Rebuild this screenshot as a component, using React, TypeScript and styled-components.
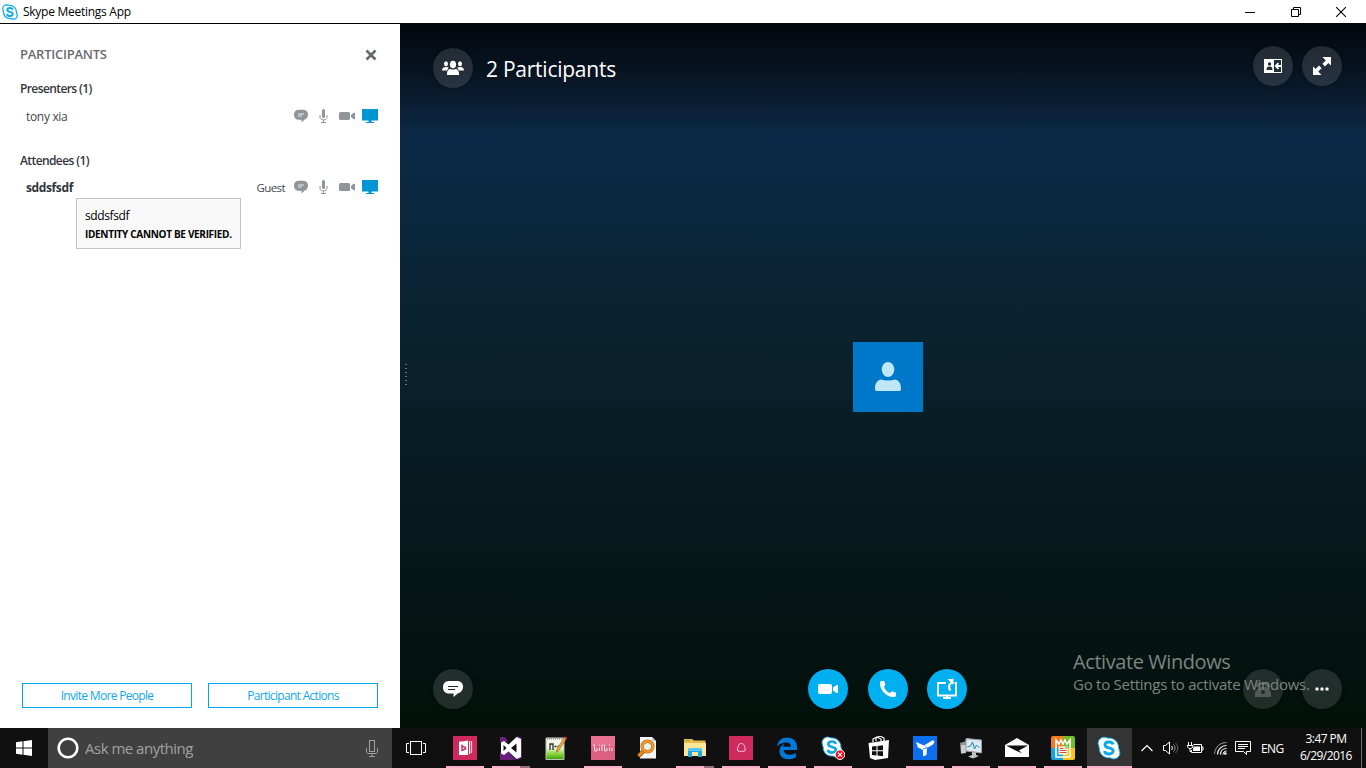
import React from 'react';
import styled, { createGlobalStyle } from 'styled-components';

const GlobalStyle = createGlobalStyle`
  * { box-sizing: border-box; }
  body {
    margin: 0;
    overflow: hidden;
    font-family: "Open Sans", "Noto Sans", sans-serif;
    font-size: 12px;
  }
  svg { display: block; flex: none; }
`;

const Desktop = styled.div`
  display: flex;
  flex-direction: column;
  width: 1366px;
  height: 768px;
  background: #fff;
`;

/* ---------- window title bar ---------- */
const TitleBar = styled.header`
  display: flex;
  align-items: center;
  height: 23px;
  flex: none;
  padding: 0 2px;
  background: #fff;
`;
const Title = styled.span`
  margin-left: 5px;
  line-height: 22px;
  color: #000;
  letter-spacing: -0.27px;
`;
const WindowControls = styled.div`
  display: flex;
  margin-left: auto;
`;
const ControlButton = styled.div`
  display: flex;
  align-items: center;
  justify-content: center;
  width: 45.5px;
  height: 21px;
`;

const Body = styled.div`
  display: flex;
  height: 705px;
  flex: none;
`;

/* ---------- participants panel ---------- */
const Panel = styled.aside`
  display: flex;
  flex-direction: column;
  width: 400px;
  flex: none;
  border-top: 1px solid #000;
  padding: 22px 22px 20px 20px;
  background: #fff;
`;
const PanelHeader = styled.div`
  display: flex;
  align-items: center;
  justify-content: space-between;
  height: 18px;
  padding-right: 1px;
`;
const PanelTitle = styled.h1`
  margin: -2px 0 0;
  font-size: 13px;
  font-weight: 600;
  letter-spacing: -0.25px;
  color: #6a6b70;
`;
const GroupTitle = styled.h2<{ $top: number }>`
  margin: ${p => p.$top}px 0 0;
  height: 18px;
  line-height: 18px;
  font-size: 12px;
  font-weight: 600;
  letter-spacing: -0.6px;
  color: #33363b;
`;
const Person = styled.div<{ $top: number }>`
  position: relative;
  display: flex;
  align-items: center;
  height: 18px;
  margin-top: ${p => p.$top}px;
  padding-left: 6px;
`;
const PersonName = styled.span<{ $self?: boolean }>`
  font-weight: ${p => (p.$self ? 700 : 400)};
  letter-spacing: ${p => (p.$self ? '-0.38px' : '-0.32px')};
  color: ${p => (p.$self ? '#33363b' : '#44474c')};
  margin-right: auto;
`;
const Role = styled.span`
  margin-right: 9px;
  font-size: 11.500px;
  letter-spacing: -0.6px;
  color: #44474c;
`;
const Tooltip = styled.div`
  position: absolute;
  left: 56px;
  top: 20px;
  width: 165px;
  height: 51px;
  padding: 8px 8px;
  border: 1px solid #c3c3c3;
  background: #f9f9f9;
  color: #000;
  line-height: 18px;
  white-space: nowrap;
`;
const TooltipName = styled.div`
  letter-spacing: -0.4px;
`;
const TooltipWarning = styled.div`
  font-size: 10px;
  font-weight: 700;
  letter-spacing: -0.32px;
`;
const PanelActions = styled.div`
  display: flex;
  gap: 16px;
  margin-top: auto;
  padding-left: 2px;
`;
const PanelButton = styled.button`
  width: 170px;
  height: 25px;
  padding: 0;
  border: 1px solid #00a9ec;
  background: #fff;
  color: #14a7e8;
  font: 400 12px "Open Sans", sans-serif;
  letter-spacing: -0.68px;
`;

/* ---------- meeting stage ---------- */
const Stage = styled.main`
  position: relative;
  display: flex;
  flex-direction: column;
  justify-content: space-between;
  flex: 1;
  background: linear-gradient(#03070d 0, #081422 50px, #0c2a47 115px, #0a2330 300px, #071a20 460px, #03110b 690px, #020e08 705px);
`;
const TopBar = styled.div`
  display: flex;
  align-items: flex-start;
  padding: 23px 24px 0 33px;
  height: 66px;
`;
const Heading = styled.div`
  margin: 9px auto 0 13px;
  font-size: 21px;
  line-height: 28px;
  letter-spacing: -0.25px;
  color: #fff;
`;
const RoundButton = styled.button<{ $accent?: boolean; $gap?: number; $drop?: number }>`
  display: flex;
  align-items: center;
  justify-content: center;
  width: 40px;
  height: 40px;
  flex: none;
  margin: ${p => p.$drop ?? 0}px 0 0 ${p => p.$gap ?? 0}px;
  padding: 0;
  border: 0;
  border-radius: 50%;
  background: ${p => (p.$accent ? '#00aff0' : 'rgba(255,255,255,0.12)')};
  box-shadow: 0 0 3px 1px rgba(0, 0, 0, 0.22);
`;
const Middle = styled.div`
  display: flex;
  align-items: center;
  height: 70px;
  margin: 19px 0 24px;
`;
const Splitter = styled.div`
  display: grid;
  gap: 3px;
  margin: -4px 0 0 5px;
`;
const Dot = styled.i`
  width: 2px;
  height: 1px;
  background: #66747c;
`;
const Avatar = styled.div`
  display: flex;
  align-items: center;
  justify-content: center;
  width: 70px;
  height: 70px;
  margin-left: 446px;
  background: #0078ca;
`;
const BottomBar = styled.div`
  display: flex;
  padding: 0 24px 19px 33px;
`;
const Watermark = styled.div`
  position: absolute;
  left: 673px;
  top: 627px;
  color: #7d8482;
  white-space: nowrap;
`;
const WatermarkTitle = styled.div`
  font-size: 20px;
  line-height: 24px;
  letter-spacing: -0.42px;
`;
const WatermarkText = styled.div`
  font-size: 15px;
  line-height: 20px;
  letter-spacing: -0.26px;
`;

/* ---------- taskbar ---------- */
const Taskbar = styled.footer`
  display: flex;
  height: 40px;
  background: #101010;
`;
const StartButton = styled.div`
  display: flex;
  align-items: center;
  justify-content: center;
  width: 48px;
`;
const SearchBox = styled.div`
  display: flex;
  align-items: center;
  width: 344px;
  padding: 0 14px 0 9px;
  background: #404040;
`;
const SearchText = styled.span`
  margin: 0 auto 0 6px;
  font-size: 15px;
  letter-spacing: -0.5px;
  color: #a0a0a0;
`;
const TaskView = styled.div`
  display: flex;
  align-items: center;
  justify-content: center;
  width: 50px;
  padding-right: 2px;
`;
type TaskState = 'idle' | 'open' | 'stacked' | 'active';
const Task = styled.div<{ $state: TaskState }>`
  display: flex;
  flex-direction: column;
  align-items: center;
  justify-content: space-between;
  width: 46px;
  padding: 8px ${p => (p.$state === 'active' ? '0 0 0' : '4px 0 4px')};
  background: ${p =>
    p.$state === 'active' ? 'linear-gradient(90deg, transparent 1px, #343434 1px)' : 'transparent'};
`;
const Underline = styled.div<{ $state: TaskState }>`
  align-self: stretch;
  height: 2px;
  margin-left: ${p => (p.$state === 'active' ? 1 : 0)}px;
  background: ${p =>
    p.$state === 'idle'
      ? 'transparent'
      : p.$state === 'stacked'
      ? 'linear-gradient(90deg, #ffaecb 28px, #95707e 28px)'
      : '#ffaecb'};
`;
const Tray = styled.div`
  display: flex;
  align-items: center;
  margin-left: 9px;
  color: #fff;
`;
const Language = styled.span`
  width: 24px;
  margin-left: 10px;
  letter-spacing: -0.6px;
`;
const Clock = styled.div`
  width: 60px;
  margin: -2px 0 0 11px;
  text-align: center;
  line-height: 17px;
  letter-spacing: -0.55px;
`;
const ShowDesktop = styled.div`
  align-self: stretch;
  width: 1px;
  margin-left: 5px;
  background: #6c6c6c;
`;

/* ---------- icons ---------- */
const SkypeGlyph = ({ size, solid }: { size: number; solid?: boolean }) => (
  <svg width={size} height={size} viewBox="0 0 24 24">
    <path
      d="M7 1.200C9 1.200 10 2 11 2.100c6-.4 10.700 4 10.600 10 0 1.200 1.300 2.800 1.300 4.800a6 6 0 0 1-6 6c-2 0-3-1-4.200-1.100C6.500 22.200 2.200 17.700 2.300 12 2.300 10.500 1.100 9.200 1.100 7.100a6 6 0 0 1 5.900-5.900z"
      fill="#fff"
      stroke={solid ? '#19b5f1' : '#12aeea'}
      strokeWidth={solid ? 1 : 2}
    />
    <path
      d="M16 8.500C15.500 6.500 13.800 6 12 6c-2.300 0-4 1.100-4 2.900 0 4 8.200 2 8.200 5.900 0 2-2 3.200-4.200 3.200-2.300 0-4.200-.9-4.500-3"
      fill="none"
      stroke="#0ba9e8"
      strokeWidth="2.900"
    />
  </svg>
);

const ChatSmall = () => (
  <svg width="14" height="14" viewBox="0 0 14 14">
    <path d="M4.500 .8h5C12.500 .8 14 3 14 5.500s-1.300 4.700-3.300 5L7.500 13.500v-2.700h-3C1.500 10.800 0 8.300 0 5.800S1.500 .8 4.500 .8z" fill="#8e959b" />
    <path d="M4 5h6M4 7h4" stroke="#fff" strokeWidth=".8" />
  </svg>
);
const MicSmall = () => (
  <svg width="9" height="14" viewBox="0 0 9 14">
    <rect x="3" y="0" width="3" height="9" rx="1.500" fill="#8e959b" />
    <path d="M1 6v2.200C1 10 2.500 10.800 4.500 10.800S8 10 8 8.200V6M4.500 11v2M2 13.500h5" fill="none" stroke="#8e959b" />
  </svg>
);
const CameraSmall = () => (
  <svg width="16" height="10" viewBox="0 0 16 10">
    <rect y="1" width="11" height="8" rx="1.500" fill="#8e959b" />
    <path d="M12 4l2.500-2.200H16v6.400h-1.500L12 6z" fill="#8e959b" />
  </svg>
);
const MonitorSmall = () => (
  <svg width="16" height="14" viewBox="0 0 16 14">
    <path d="M0 0h16v11.500H9.500V13H12v1H4v-1h2.500v-1.500H0z" fill="#0095d3" />
  </svg>
);
const Statuses = styled.div`
  display: flex;
  align-items: center;
`;
const StatusSlot = styled.span<{ $gap: number }>`
  margin-left: ${p => p.$gap}px;
`;
const StatusIcons = () => (
  <Statuses>
    <StatusSlot $gap={0}><ChatSmall /></StatusSlot>
    <StatusSlot $gap={11}><MicSmall /></StatusSlot>
    <StatusSlot $gap={11}><CameraSmall /></StatusSlot>
    <StatusSlot $gap={7}><MonitorSmall /></StatusSlot>
  </Statuses>
);

const PeopleIcon = () => (
  <svg width="22" height="16" viewBox="0 0 22 16" fill="#fff">
    <ellipse cx="4" cy="3.700" rx="2" ry="2.500" />
    <ellipse cx="18" cy="3.700" rx="2" ry="2.500" />
    <path d="M0 10.500C0 8 1.500 7 4 7c1.200 0 2.200.2 2.800.6L5 10.500zM22 10.500C22 8 20.500 7 18 7c-1.200 0-2.200.2-2.800.6l1.800 2.900z" />
    <ellipse cx="11" cy="4.500" rx="3.100" ry="3.800" />
    <path d="M5 15v-1.500C5 10.500 6.500 9 8.500 9c1 .8 4 .8 5 0 2 0 3.500 1.500 3.500 4.500V15z" />
  </svg>
);
const ContactIcon = () => (
  <svg width="18" height="14" viewBox="0 0 18 14">
    <path d="M0 0h18v14H0z" fill="#fff" />
    <path d="M10 1h7v12h-7z" fill="#202e3a" />
    <circle cx="5.500" cy="5" r="1.700" fill="#202e3a" />
    <path d="M2.500 11c0-2.500 1-3.500 3-3.500s3 1 3 3.500z" fill="#202e3a" />
    <path d="M17 7h-5M14.500 4.200L11.800 7l2.700 2.800" fill="none" stroke="#fff" strokeWidth="1.800" />
  </svg>
);
const ExpandIcon = () => (
  <svg width="18" height="18" viewBox="0 0 18 18">
    <path d="M9.500 0H18v8.500l-2.600-2.500-3.400 3.400-2.600-2.600L12.800 3.400zM8.500 18H0V9.500L2.600 12 6 8.600l2.600 2.600-3.400 3.400z" fill="#fff" />
  </svg>
);
const ChatIcon = () => (
  <svg width="20" height="18" viewBox="0 0 20 18">
    <path d="M6 1h8c4 0 6 2.500 6 5.700s-2 5.900-5 6.600L10.500 17v-3.500H6c-4 0-6-3-6-6.300S2 1 6 1z" fill="#fff" />
    <path d="M5 6.500h10M5 9.500h7" stroke="#202b28" />
  </svg>
);
const CameraIcon = () => (
  <svg width="20" height="10" viewBox="0 0 20 10" fill="#fff">
    <rect width="14" height="10" rx="2" />
    <path d="M15 3.600L18.500 1H20v8h-1.500L15 6.400z" />
  </svg>
);
const PhoneIcon = () => (
  <svg width="16" height="16" viewBox="0 0 16 16">
    <path d="M1 0h2.800c.9 0 1.700 3.300 1.400 4.100C5 5 3.900 5.300 4.100 6c.6 2.400 3 5 5.600 5.900.8.2 1-1.100 1.800-1.300.8-.2 4.500.7 4.500 1.500V15c-.3.800-2 1-3 1C6.500 16 0 9 0 3 0 2 .3.300 1 0z" fill="#fff" />
  </svg>
);
const PresentIcon = () => (
  <svg width="20" height="20" viewBox="0 0 20 20">
    <path d="M9 4H1v12.500h18V4h-1.500M10 17v2M6 19h8" fill="none" stroke="#fff" strokeWidth="1.900" />
    <path d="M13.500 11.500c-2-2.500-2-5.500 1-8" fill="none" stroke="#fff" strokeWidth="2.200" />
    <path d="M10.500 0h6v6z" fill="#fff" />
  </svg>
);
const AvatarIcon = () => (
  <svg width="26" height="30" viewBox="0 0 26 30" fill="#bfe7f8">
    <ellipse cx="13" cy="7.500" rx="6.300" ry="7.400" />
    <path d="M0 26.500C0 21 2.500 18 6.500 17.500c3.500 1.300 9.500 1.300 13 0 4 .5 6.500 3.500 6.500 9 0 1.500-.5 2.500-1.500 2.500h-23C.5 29 0 28 0 26.500z" />
  </svg>
);
const DialPhoneIcon = () => (
  <svg width="16" height="15" viewBox="0 0 16 15">
    <path d="M1 3c0-4 14-4 14 0v2h-4V3H5v2H1zM5 5h6l5 5v5H0v-5z" fill="#525856" />
    <circle cx="8" cy="10" r="2" fill="#202825" />
  </svg>
);
const MoreIcon = () => (
  <svg width="14" height="4" viewBox="0 0 14 4" fill="#fff">
    <rect x=".5" y=".5" width="3" height="3" rx=".6" />
    <rect x="5.500" y=".5" width="3" height="3" rx=".6" />
    <rect x="10.500" y=".5" width="3" height="3" rx=".6" />
  </svg>
);

const TaskIcon = ({ children }: { children: React.ReactNode }) => (
  <svg width="24" height="24" viewBox="0 0 24 24">{children}</svg>
);

const icons: { state: TaskState; art: React.ReactNode }[] = [
  {
    state: 'open',
    art: (
      <TaskIcon>
        <path d="M0 0h24v24H0z" fill="#cf2a60" />
        <path d="M6 5.500h3.500L15 4.500v14.500H6zM16 5h1.200v13H16zM18.200 5h.9v12h-.9z" fill="#fff" />
        <path d="M9 8.500v6l3.500-1.500v-1.500L9.500 10.500" fill="none" stroke="#cf2a60" strokeWidth="1.400" />
      </TaskIcon>
    ),
  },
  {
    state: 'stacked',
    art: (
      <TaskIcon>
        <path d="M1 16l4 2 4-3 8 9H1zM1 1h5l3 4-3 2-2-1-3 1zM18 0l5 2v20l-5 2z" fill="#68217a" />
        <path d="M17.500 1L22 3v18l-4.500 2-8-7.500L5 19l-3-1.500v-11L5 5l4.500 3.500zM17.500 7.500L12 12l5.500 4.500zM4.500 9v6l3-3z" fill="#fff" fillRule="evenodd" />
      </TaskIcon>
    ),
  },
  {
    state: 'idle',
    art: (
      <TaskIcon>
        <defs>
          <linearGradient id="npp" x1="0" y1="0" x2="0" y2="1">
            <stop offset=".45" stopColor="#f2f6e6" />
            <stop offset=".75" stopColor="#83d735" />
            <stop offset="1" stopColor="#3f9c10" />
          </linearGradient>
        </defs>
        <path d="M1 2h18v21.500H1z" fill="url(#npp)" stroke="#bcc5b3" />
        <path d="M2 2.500h16" stroke="#8b8f8c" strokeWidth="2" strokeDasharray="1 1" />
        <path d="M5 14V8h3v6M9.500 10.500h2M12.500 10.500h2" stroke="#273325" strokeWidth="1.300" fill="none" />
        <path d="M19.500 1l2 1.300-7.500 12-2.600 2.200.5-3.300z" fill="#f2ac31" stroke="#8d5b20" strokeWidth=".6" />
        <path d="M18.800 2l1-1.500 2.200 1.300-1 1.600z" fill="#d63f36" />
      </TaskIcon>
    ),
  },
  {
    state: 'open',
    art: (
      <TaskIcon>
        <path d="M0 0h24v24H0z" fill="#db5f80" />
        <path d="M0 0h24v10H0z" fill="#e87191" />
        <path d="M3 8l.8 7h2l.8-2-1.500-1M8.500 11.500V15M11 8.500V15M13.500 8.500V15h2l1-2-1.500-1M18.500 11.500V15M21 11.500V15M8 9l1 .5M18 9l1 .5" stroke="#fbe3ea" strokeWidth="1" fill="none" />
      </TaskIcon>
    ),
  },
  {
    state: 'idle',
    art: (
      <TaskIcon>
        <path d="M3 1h12l4 4v17.500H3z" fill="#f4f4f3" />
        <path d="M15 1v4h4" fill="#c5c8cc" />
        <path d="M7 14.500L1.500 20" stroke="#6e441e" strokeWidth="4" />
        <path d="M7 14.500L1.500 20" stroke="#f18b18" strokeWidth="2.600" />
        <circle cx="10.500" cy="10.500" r="5.300" fill="#e5f1f7" stroke="#aa5c12" strokeWidth="3.400" />
        <circle cx="10.500" cy="10.500" r="5.300" fill="none" stroke="#f69c25" strokeWidth="2.400" />
      </TaskIcon>
    ),
  },
  {
    state: 'stacked',
    art: (
      <TaskIcon>
        <path d="M1 3h8l2 1.500h11.500V20H1z" fill="#e8ba4b" />
        <path d="M1 7h22v13H1z" fill="#ffe596" />
        <path d="M2.500 4h4v1h-4z" fill="#78ba66" />
        <path d="M5 21v-8l1.500-1h11l1.500 1v8h-4v-5H9v5z" fill="#20a6e6" />
        <path d="M5 15v-2l1.500-1h11l1.500 1v2z" fill="#56c5f3" />
      </TaskIcon>
    ),
  },
  {
    state: 'open',
    art: (
      <TaskIcon>
        <path d="M0 0h24v24H0z" fill="#cf2a60" />
        <path d="M9 15c-1-1-.5-3 .2-4.500C9.500 8.500 10.500 7.500 12.300 7.500s3 1 3.200 3c.8 1.500 1 3.500.2 4.500l-1.700.3-1.600.2-1.800-.2z" fill="none" stroke="#f5cbd7" />
      </TaskIcon>
    ),
  },
  {
    state: 'open',
    art: (
      <TaskIcon>
        <path
          d="M2 10.500C3 4.500 7 1.500 12.300 1.500c6 0 9.700 4 9.700 9.800V14H8.700c.2 3.500 3 4.700 6.300 4.700 2.200 0 4.100-.6 5.800-1.600v4.500c-2 1.200-4.600 1.700-7.200 1.700-5.600 0-9.200-3.100-9.200-8 0-3.600 2-6.200 5-7.500-.8 1-1.100 2-1.200 3h7.500c0-2.800-1.500-4.200-4.500-4.200-3.500 0-6.800 1.300-9.200 3.900z"
          fill="#0078d7"
        />
      </TaskIcon>
    ),
  },
  {
    state: 'open',
    art: (
      <TaskIcon>
        <g transform="translate(0 0) scale(.92)">
          <path d="M7 1.200C9 1.200 10 2 11 2.100c6-.4 10.700 4 10.600 10 0 1.200 1.300 2.800 1.300 4.800a6 6 0 0 1-6 6c-2 0-3-1-4.200-1.100C6.500 22.200 2.200 17.700 2.300 12 2.300 10.500 1.100 9.200 1.100 7.100a6 6 0 0 1 5.900-5.900z" fill="#fff" stroke="#19b5f1" />
          <path d="M16 8.500C15.500 6.500 13.800 6 12 6c-2.300 0-4 1.100-4 2.900 0 4 8.200 2 8.200 5.900 0 2-2 3.200-4.200 3.200-2.300 0-4.200-.9-4.500-3" fill="none" stroke="#0ba9e8" strokeWidth="2.900" />
        </g>
        <circle cx="19" cy="18.700" r="4.800" fill="#e81123" stroke="#fff" />
        <path d="M17 16.700l4 4M21 16.700l-4 4" stroke="#fff" strokeWidth="1.200" />
      </TaskIcon>
    ),
  },
  {
    state: 'idle',
    art: (
      <TaskIcon>
        <path d="M6 6V3l4-2 4 2v3M9 5V2l4-2 4 2v4" fill="none" stroke="#fff" strokeWidth="1.200" />
        <path d="M1.500 7L22 4l-1 18-13 2-5-2z" fill="#fff" />
        <path d="M5 10.500l4.500-.5v4.300H5zM10.500 9.900l5.500-.6v5h-5.500zM5 15.300h4.500v4.200L5 19zM10.500 15.300H16v5l-5.500-.7z" fill="#101010" />
      </TaskIcon>
    ),
  },
  {
    state: 'open',
    art: (
      <TaskIcon>
        <path d="M0 0h24v24H0z" fill="#0b6ff0" />
        <path d="M3 6l8 3.500 9-5.500 1.500 2-1.500 2.500-6 3.500-.5 7-3.500 1.500V14L5 11.500 4 9z" fill="#fff" />
        <path d="M12 9.500l2.500 2.500M10 13l4-1" stroke="#0b6ff0" strokeWidth=".7" />
      </TaskIcon>
    ),
  },
  {
    state: 'open',
    art: (
      <TaskIcon>
        <path d="M1 7l6-2v12l-5 1z" fill="#8c9398" />
        <path d="M2 9h5v8H2z" fill="#c8ced1" />
        <path d="M7 2.500L22.500 4v13L7 15z" fill="#dfe3e5" stroke="#989ea2" />
        <path d="M8.500 4.500L21 6v9L8.500 13.300z" fill="#dbeef7" />
        <path d="M8.500 11l3-1 2-4 2 7 2-4 3 3" fill="none" stroke="#237cab" />
        <path d="M13 16l4 .5V19l3 1-6 2.500-5-2 4-1.500z" fill="#bfc5c9" />
      </TaskIcon>
    ),
  },
  {
    state: 'open',
    art: (
      <TaskIcon>
        <path d="M0 9l12-7 12 7v12H0z" fill="#fff" />
        <path d="M1 9.500h22l-9 5 3 2.700-7-3z" fill="#101010" />
      </TaskIcon>
    ),
  },
  {
    state: 'open',
    art: (
      <TaskIcon>
        <clipPath id="tile"><rect width="24" height="24" rx="2" /></clipPath>
        <g clipPath="url(#tile)">
          <rect width="12" height="12" fill="#f47b20" />
          <rect x="12" width="12" height="12" fill="#75bd2d" />
          <rect y="12" width="12" height="12" fill="#19a4dc" />
          <rect x="12" y="12" width="12" height="12" fill="#fdc41e" />
        </g>
        <path d="M5 4v17h14V4l-3 4-2-4-2 4-2-4-2 4z" fill="none" stroke="#fff" strokeWidth="1.600" />
        <path d="M7.500 10.500h9v8h-9z" fill="#fff" />
        <path d="M8.500 12.500h4M8.500 14.500h7M8.500 16.500h7M14 12h2" stroke="#d64b24" />
      </TaskIcon>
    ),
  },
  { state: 'active', art: <SkypeGlyph size={24} solid /> },
];

const TraySlot = styled.span<{ $gap: number }>`
  margin-left: ${p => p.$gap}px;
`;

export default function App() {
  return (
    <Desktop>
      <GlobalStyle />
      <TitleBar>
        <SkypeGlyph size={16} />
        <Title>Skype Meetings App</Title>
        <WindowControls>
          <ControlButton>
            <svg width="10" height="10"><path d="M0 5.500h10" stroke="#000" /></svg>
          </ControlButton>
          <ControlButton>
            <svg width="10" height="10" fill="none" stroke="#000"><path d="M.5 2.500h7v7h-7zM2.500 2V.5h7v7H8" /></svg>
          </ControlButton>
          <ControlButton>
            <svg width="10" height="10"><path d="M0 0l10 10M10 0L0 10" stroke="#000" strokeWidth="1.100" /></svg>
          </ControlButton>
        </WindowControls>
      </TitleBar>

      <Body>
        <Panel>
          <PanelHeader>
            <PanelTitle>PARTICIPANTS</PanelTitle>
            <svg width="12" height="12"><path d="M1.500 1.500l9 9M10.500 1.500l-9 9" stroke="#686a6f" strokeWidth="2.700" /></svg>
          </PanelHeader>
          <GroupTitle $top={16}>Presenters (1)</GroupTitle>
          <Person $top={9}>
            <PersonName>tony xia</PersonName>
            <StatusIcons />
          </Person>
          <GroupTitle $top={27}>Attendees (1)</GroupTitle>
          <Person $top={8}>
            <PersonName $self>sddsfsdf</PersonName>
            <Role>Guest</Role>
            <StatusIcons />
            <Tooltip>
              <TooltipName>sddsfsdf</TooltipName>
              <TooltipWarning>IDENTITY CANNOT BE VERIFIED.</TooltipWarning>
            </Tooltip>
          </Person>
          <PanelActions>
            <PanelButton>Invite More People</PanelButton>
            <PanelButton>Participant Actions</PanelButton>
          </PanelActions>
        </Panel>

        <Stage>
          <TopBar>
            <RoundButton $drop={2}><PeopleIcon /></RoundButton>
            <Heading>2 Participants</Heading>
            <RoundButton><ContactIcon /></RoundButton>
            <RoundButton $gap={9}><ExpandIcon /></RoundButton>
          </TopBar>
          <Middle>
            <Splitter>
              {[0, 1, 2, 3, 4, 5].map(i => <Dot key={i} />)}
            </Splitter>
            <Avatar><AvatarIcon /></Avatar>
          </Middle>
          <BottomBar>
            <RoundButton><ChatIcon /></RoundButton>
            <RoundButton $accent $gap={335}><CameraIcon /></RoundButton>
            <RoundButton $accent $gap={20}><PhoneIcon /></RoundButton>
            <RoundButton $accent $gap={19}><PresentIcon /></RoundButton>
            <RoundButton $gap={276}><DialPhoneIcon /></RoundButton>
            <RoundButton $gap={19}><MoreIcon /></RoundButton>
          </BottomBar>
          <Watermark>
            <WatermarkTitle>Activate Windows</WatermarkTitle>
            <WatermarkText>Go to Settings to activate Windows.</WatermarkText>
          </Watermark>
        </Stage>
      </Body>

      <Taskbar>
        <StartButton>
          <svg width="16" height="16" fill="#fff">
            <path d="M0 2.200L6.500 1.300v6.200H0zM7.500 1.200L16 0v7.500H7.500zM0 8.500h6.500v6.200L0 13.800zM7.500 8.500H16V16l-8.500-1.200z" />
          </svg>
        </StartButton>
        <SearchBox>
          <svg width="22" height="22"><circle cx="11" cy="11" r="9.300" fill="none" stroke="#fff" strokeWidth="2.600" /></svg>
          <SearchText>Ask me anything</SearchText>
          <svg width="12" height="18" fill="none" stroke="#a0a0a0">
            <rect x="3.500" y="1.500" width="5" height="11" />
            <path d="M.5 9v4.500l1 1h9l1-1V9M6 14.500v3M3 17.500h6" />
          </svg>
        </SearchBox>
        <TaskView>
          <svg width="20" height="14" fill="none" stroke="#fff">
            <rect x="4.500" y=".5" width="11" height="13" />
            <path d="M3 2.500H.5v9H3M17 2.500h2.500v9H17" />
          </svg>
        </TaskView>
        {icons.map((item, i) => (
          <Task key={i} $state={item.state}>
            {item.art}
            <Underline $state={item.state} />
          </Task>
        ))}
        <Tray>
          <svg width="12" height="8" fill="none" stroke="#fff" strokeWidth="1.200"><path d="M.5 7L6 1.500 11.500 7" /></svg>
          <TraySlot $gap={10}>
            <svg width="17" height="14" fill="none" stroke="#fff">
              <path d="M.5 4.500h2l4-3.500v12l-4-3.500h-2z" />
              <path d="M8.500 5c1 1 1 3 0 4" />
              <path d="M10.500 3.500c2 2 2 5 0 7" stroke="#999" />
              <path d="M12.500 2c3 3 3 7 0 10" stroke="#666" />
            </svg>
          </TraySlot>
          <TraySlot $gap={7}>
            <svg width="17" height="14" fill="none" stroke="#fff">
              <path d="M6.500 3.500h8v8h-10V9M14.500 6h1.500v3h-1.500" />
              <path d="M7 5.500h6v4.500H6V8z" fill="#fff" stroke="none" />
              <path d="M1.500 1v3M4.500 1v3M0 4.500h6v1.500l-2 1.500H2L.5 6zM3 8v2.500h2" />
            </svg>
          </TraySlot>
          <TraySlot $gap={10}>
            <svg width="13" height="14" fill="none">
              <path d="M.5 13C1 6 6 1.500 12.500 1.500" stroke="#999" />
              <path d="M3.500 13.500c0-5 4-9 9-9M6.500 13.500c0-3.500 2.500-6 6-6" stroke="#fff" strokeWidth="1.200" />
              <path d="M9 13.500c0-2 1.500-3.500 3.500-3.500" stroke="#fff" />
              <circle cx="11.300" cy="12.500" r="1.300" fill="#fff" />
            </svg>
          </TraySlot>
          <TraySlot $gap={8}>
            <svg width="16" height="16" fill="none" stroke="#fff">
              <path d="M.5 1.500h15v10h-4v3l-3-3h-8zM3 4.500h10M3 6.500h10M3 8.500h7" />
            </svg>
          </TraySlot>
          <Language>ENG</Language>
          <Clock>
            <div>3:47 PM</div>
            <div>6/29/2016</div>
          </Clock>
          <ShowDesktop />
        </Tray>
      </Taskbar>
    </Desktop>
  );
}
